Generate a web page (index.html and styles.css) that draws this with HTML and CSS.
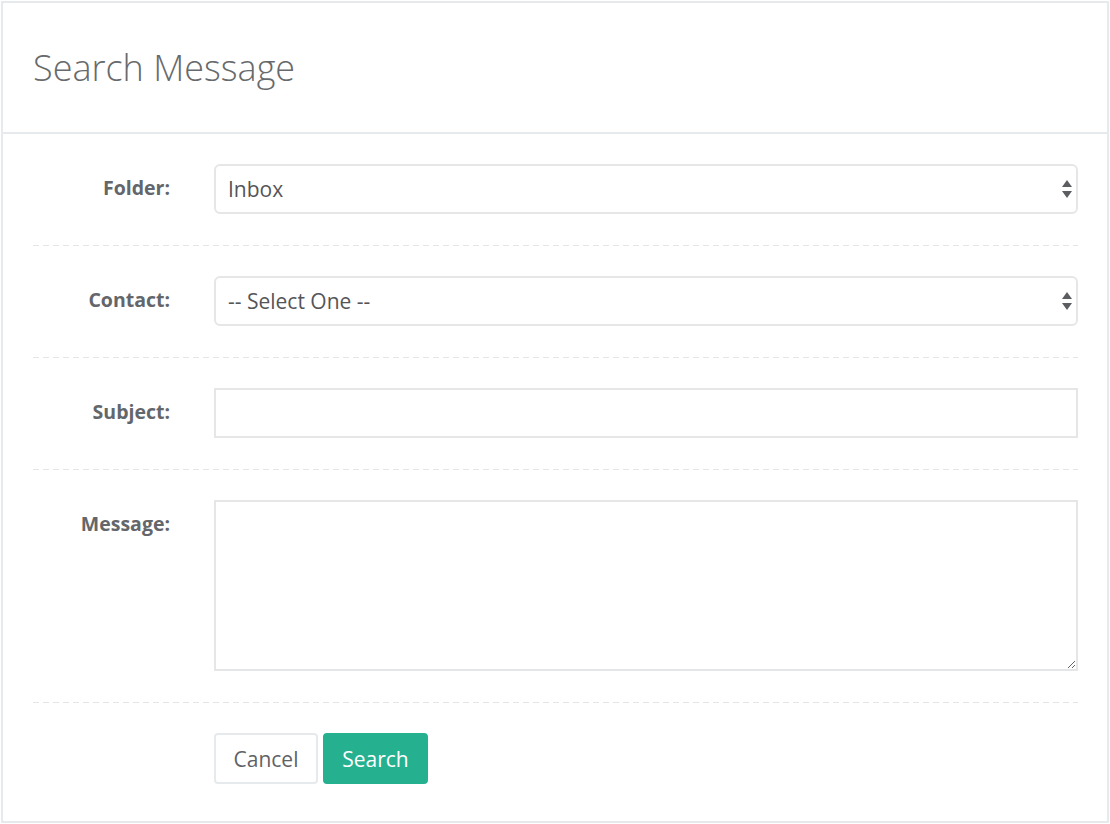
FILE: index.html
```html
<!DOCTYPE html>
<html lang="en">
<head>
<meta charset="utf-8">
<title>Search Message</title>
<link rel="stylesheet" href="styles.css">
</head>
<body>
<div class="panel">
  <div class="panel-head">
    <h1 class="panel-title">Search Message</h1>
  </div>
  <form class="panel-body">
    <div class="field">
      <label class="field-label" for="folder">Folder:</label>
      <div class="select-wrap">
        <select id="folder" class="control control-select">
          <option>Inbox</option>
          <option>Sent</option>
          <option>Drafts</option>
        </select>
        <svg class="select-arrows" width="10" height="18" viewBox="0 0 10 18" aria-hidden="true">
          <path d="M5 0 L10 7 L0 7 Z" fill="#5b5d60"/>
          <path d="M0 11 L10 11 L5 18 Z" fill="#5b5d60"/>
        </svg>
      </div>
    </div>
    <div class="divider"></div>
    <div class="field">
      <label class="field-label" for="contact">Contact:</label>
      <div class="select-wrap">
        <select id="contact" class="control control-select">
          <option>-- Select One --</option>
        </select>
        <svg class="select-arrows" width="10" height="18" viewBox="0 0 10 18" aria-hidden="true">
          <path d="M5 0 L10 7 L0 7 Z" fill="#5b5d60"/>
          <path d="M0 11 L10 11 L5 18 Z" fill="#5b5d60"/>
        </svg>
      </div>
    </div>
    <div class="divider"></div>
    <div class="field">
      <label class="field-label" for="subject">Subject:</label>
      <input id="subject" class="control control-text" type="text">
    </div>
    <div class="divider"></div>
    <div class="field">
      <label class="field-label" for="message">Message:</label>
      <textarea id="message" class="control control-area"></textarea>
    </div>
    <div class="divider"></div>
    <div class="field">
      <span></span>
      <div class="actions">
        <button type="button" class="btn btn-white">Cancel</button>
        <button type="submit" class="btn btn-primary">Search</button>
      </div>
    </div>
  </form>
</div>
</body>
</html>
```

FILE: styles.css
```css
* {
  box-sizing: border-box;
}

html, body {
  margin: 0;
  padding: 0;
  background: #ffffff;
}

body {
  font-family: "Open Sans", "Liberation Sans", sans-serif;
  color: #676a6c;
  padding: 1px;
}

.panel {
  width: 1108px;
  height: 822px;
  border: 2px solid #e7eaec;
  background: #ffffff;
}

.panel-head {
  height: 131px;
  border-bottom: 2px solid #e7eaec;
  padding: 0 30px;
  display: flex;
  align-items: center;
}

.panel-title {
  margin: 0;
  font-size: 36px;
  font-weight: 300;
  color: #676a6c;
  line-height: 1;
}

.panel-body {
  padding: 30px 29px 0 30px;
}

.field {
  display: grid;
  grid-template-columns: 137px 1fr;
  column-gap: 44px;
  align-items: start;
}

.field-label {
  display: block;
  text-align: right;
  font-size: 19.5px;
  font-weight: 700;
  line-height: 48px;
  color: #63666a;
}

.divider {
  height: 1px;
  margin: 31px 0 30px;
  background: repeating-linear-gradient(to right, #e3e5e7 0, #e3e5e7 6px, transparent 6px, transparent 10px);
}

.control {
  display: block;
  width: 100%;
  margin: 0;
  font-family: inherit;
  font-size: 21px;
  color: #555558;
  background: #ffffff;
  border: 2px solid #e5e6e7;
  outline: none;
}

.select-wrap {
  position: relative;
}

.control-select {
  height: 50px;
  padding: 0 40px 0 12px;
  border-radius: 6px;
  -webkit-appearance: none;
  appearance: none;
}

.select-arrows {
  position: absolute;
  right: 6px;
  top: 16px;
}

.control-text {
  height: 50px;
  padding: 0 12px;
  border-radius: 0;
}

.control-area {
  height: 171px;
  padding: 10px 12px;
  border-radius: 0;
  resize: vertical;
}

.actions {
  display: flex;
  gap: 5px;
}

.btn {
  height: 51px;
  padding: 0 10px;
  font-family: inherit;
  font-size: 21px;
  border-radius: 4px;
  cursor: pointer;
}

.btn-white {
  width: 104px;
  background: #ffffff;
  border: 2px solid #e7eaec;
  color: #5f6265;
}

.btn-primary {
  width: 105px;
  background: #25b190;
  border: 2px solid #25b190;
  color: #ffffff;
}
```
